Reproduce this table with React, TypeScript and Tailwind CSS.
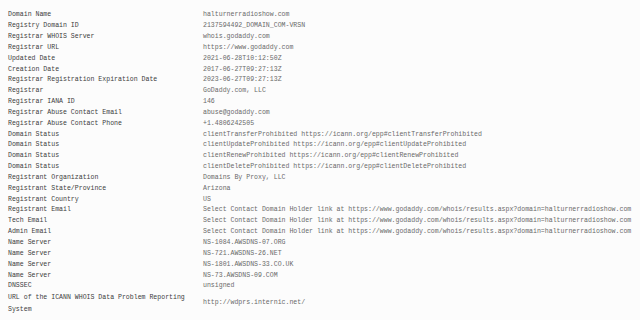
const rows: [string, string][] = [
  ["Domain Name", "halturnerradioshow.com"],
  ["Registry Domain ID", "2137594492_DOMAIN_COM-VRSN"],
  ["Registrar WHOIS Server", "whois.godaddy.com"],
  ["Registrar URL", "https://www.godaddy.com"],
  ["Updated Date", "2021-06-28T10:12:50Z"],
  ["Creation Date", "2017-06-27T09:27:13Z"],
  ["Registrar Registration Expiration Date", "2023-06-27T09:27:13Z"],
  ["Registrar", "GoDaddy.com, LLC"],
  ["Registrar IANA ID", "146"],
  ["Registrar Abuse Contact Email", "abuse@godaddy.com"],
  ["Registrar Abuse Contact Phone", "+1.4806242505"],
  ["Domain Status", "clientTransferProhibited https://icann.org/epp#clientTransferProhibited"],
  ["Domain Status", "clientUpdateProhibited https://icann.org/epp#clientUpdateProhibited"],
  ["Domain Status", "clientRenewProhibited https://icann.org/epp#clientRenewProhibited"],
  ["Domain Status", "clientDeleteProhibited https://icann.org/epp#clientDeleteProhibited"],
  ["Registrant Organization", "Domains By Proxy, LLC"],
  ["Registrant State/Province", "Arizona"],
  ["Registrant Country", "US"],
  ["Registrant Email", "Select Contact Domain Holder link at https://www.godaddy.com/whois/results.aspx?domain=halturnerradioshow.com"],
  ["Tech Email", "Select Contact Domain Holder link at https://www.godaddy.com/whois/results.aspx?domain=halturnerradioshow.com"],
  ["Admin Email", "Select Contact Domain Holder link at https://www.godaddy.com/whois/results.aspx?domain=halturnerradioshow.com"],
  ["Name Server", "NS-1084.AWSDNS-07.ORG"],
  ["Name Server", "NS-721.AWSDNS-26.NET"],
  ["Name Server", "NS-1801.AWSDNS-33.CO.UK"],
  ["Name Server", "NS-73.AWSDNS-09.COM"],
  ["DNSSEC", "unsigned"],
];

export default function App() {
  return (
    <div className="w-[640px] h-[320px] overflow-hidden bg-[#fcfcfc] pt-[10.3px] pl-2 font-['Liberation_Mono',monospace] text-[6.55px] leading-[10.85px]">
      <div className="grid grid-cols-[195px_1fr] items-center">
        {rows.map(([label, value], i) => (
          <div key={i} className="contents">
            <div className="pr-[12px] text-[#3c3c3c]">{label}</div>
            <div className="whitespace-nowrap text-[#6a6a6a]">{value}</div>
          </div>
        ))}
        <div className="pr-[12px] leading-[11.6px] text-[#3c3c3c]">URL of the ICANN WHOIS Data Problem Reporting System</div>
        <div className="whitespace-nowrap text-[#6a6a6a]">http://wdprs.internic.net/</div>
      </div>
    </div>
  );
}
